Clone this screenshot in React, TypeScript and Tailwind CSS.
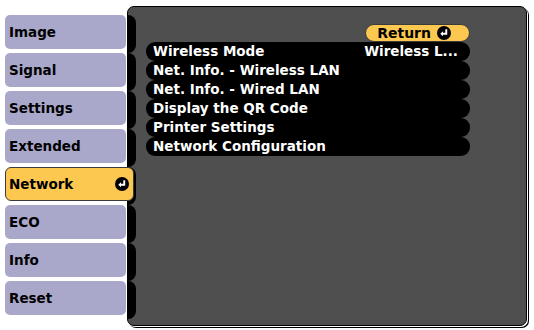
const tabs = ["Image", "Signal", "Settings", "Extended", "Network", "ECO", "Info", "Reset"];

const rows = [
  { label: "Wireless Mode", value: "Wireless L..." },
  { label: "Net. Info. - Wireless LAN", value: "" },
  { label: "Net. Info. - Wired LAN", value: "" },
  { label: "Display the QR Code", value: "" },
  { label: "Printer Settings", value: "" },
  { label: "Network Configuration", value: "" },
];

const EnterIcon = () => (
  <svg width="14" height="14" viewBox="0 0 13 13">
    <circle cx="6.5" cy="6.5" r="6.5" fill="#000" />
    <path d="M8.6 3 V7.2 H5" stroke="#fff" strokeWidth="1.8" fill="none" />
    <path d="M3 7.2 L5.6 4.8 V9.6 Z" fill="#fff" />
  </svg>
);

export default function App() {
  return (
    <div className="w-[534px] h-[330px] bg-white flex font-['DejaVu_Sans',sans-serif] text-[13.5px] font-bold overflow-hidden">
      <div className="flex flex-col items-start gap-[4px] pl-[5px] pt-[15px] w-[127px] shrink-0">
        {tabs.map((t) =>
          t === "Network" ? (
            <div
              key={t}
              className="relative z-10 w-[129px] h-[34px] bg-[#fdc850] border border-[#3a3a3a] rounded-[6px] flex items-center justify-between pl-[3px] pr-[4px] text-black"
            >
              <span>{t}</span>
              <EnterIcon />
            </div>
          ) : (
            <div
              key={t}
              className="w-[121px] h-[34px] bg-[#aaa8ca] rounded-[5px] flex items-center pl-[4px] text-black"
            >
              {t}
            </div>
          )
        )}
      </div>
      <div className="mt-[6px] w-[400px] h-[320px] bg-[#4f4f4f] border border-black rounded-[7px] shadow-[1px_1px_0_#fff,2px_2px_0_#000] flex">
        <div className="flex flex-col pt-[8px] w-[8px] shrink-0">
          {tabs.map((t) => (
            <div key={t} className="h-[38px] bg-black rounded-r-[9px]" />
          ))}
        </div>
        <div className="flex flex-col items-end pl-[10px] pt-[17px] w-[334px]">
          <div className="w-[105px] h-[18px] bg-[#fdc850] border border-[#3a3a3a] rounded-full flex items-center justify-end gap-[6px] pr-[18px] text-black leading-none text-[14px]">
            <span>Return</span>
            <EnterIcon />
          </div>
          <div className="flex flex-col w-[324px]">
            {rows.map((r) => (
              <div
                key={r.label}
                className="h-[19px] bg-black rounded-[9px] flex items-center justify-between pl-[7px] pr-[12px] text-white leading-none"
              >
                <span>{r.label}</span>
                <span>{r.value}</span>
              </div>
            ))}
          </div>
        </div>
      </div>
    </div>
  );
}
